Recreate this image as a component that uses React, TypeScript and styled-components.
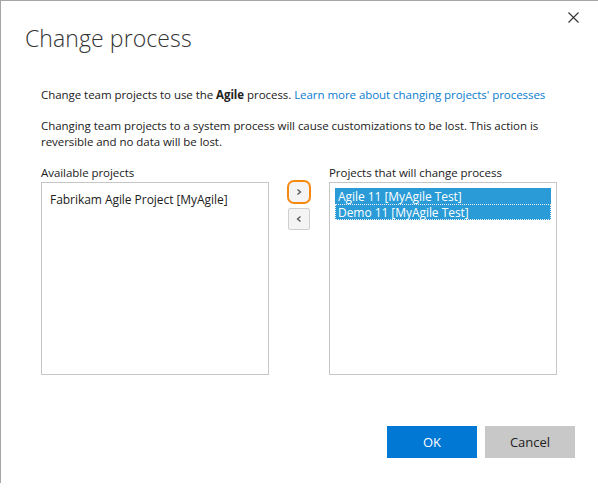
import React from "react";
import styled, { createGlobalStyle } from "styled-components";

const GlobalStyle = createGlobalStyle`
  html, body {
    margin: 0;
    padding: 0;
    background: #fff;
  }
  body {
    font-family: "Open Sans", "Noto Sans", sans-serif;
    color: #212121;
  }
`;

const Dialog = styled.div`
  width: 597px;
  height: 482px;
  border-left: 1px solid #a6a6a6;
  border-top: 1px solid #a6a6a6;
  display: flex;
  flex-direction: column;
`;

const Header = styled.div`
  display: flex;
  justify-content: space-between;
  align-items: flex-start;
  padding: 0 18px 0 24px;
`;

const Title = styled.h1`
  margin: 22px 0 0;
  font-size: 23px;
  font-weight: 300;
  line-height: 30px;
  color: #333;
  letter-spacing: 0.1px;
`;

const CloseButton = styled.button`
  margin-top: 9px;
  width: 14px;
  height: 14px;
  padding: 0;
  border: 0;
  background: none;
  display: flex;
  align-items: center;
  justify-content: center;
  cursor: pointer;
`;

const Body = styled.div`
  padding: 0 40px;
  flex: 1;
  font-size: 11.5px;
  line-height: 16px;
  letter-spacing: -0.05px;
`;

const Paragraph = styled.p<{ $top: number }>`
  margin: ${p => p.$top}px 0 0;
`;

const Link = styled.a`
  color: #0a7ccd;
  text-decoration: none;
`;

const Columns = styled.div`
  display: flex;
  align-items: flex-start;
  margin-top: 15px;
`;

const Column = styled.div`
  width: 228px;
  display: flex;
  flex-direction: column;
`;

const Label = styled.div`
  height: 16px;
  margin-bottom: 1px;
`;

const ListBox = styled.div`
  box-sizing: border-box;
  height: 193px;
  border: 1px solid #c6c6c6;
  padding: 5px 5px;
`;

const Item = styled.div<{ $selected?: boolean; $focused?: boolean }>`
  box-sizing: border-box;
  height: 16px;
  line-height: 15px;
  padding: 0 2px;
  white-space: nowrap;
  font-size: 12px;
  color: ${p => (p.$selected ? "#fff" : "#212121")};
  background: ${p => (p.$selected ? "#2a9bd6" : "transparent")};
  border: 1px dotted ${p => (p.$focused ? "#f0f0f0" : "transparent")};
`;

const PlainItem = styled(Item)`
  padding: 3px 2px 0;
  height: auto;
`;

const MoveButtons = styled.div`
  width: 60px;
  display: flex;
  flex-direction: column;
  align-items: center;
  gap: 5px;
  padding-top: 16px;
`;

const MoveButton = styled.button<{ $focused?: boolean }>`
  box-sizing: border-box;
  width: 22px;
  height: 22px;
  padding: 0;
  display: flex;
  align-items: center;
  justify-content: center;
  background: #f4f4f4;
  border: 1px solid ${p => (p.$focused ? "#f6870f" : "#cfcfcf")};
  border-radius: ${p => (p.$focused ? "6px" : "2px")};
  box-shadow: ${p => (p.$focused ? "0 0 0 1px #f6870f" : "none")};
  cursor: pointer;
`;

const Footer = styled.div`
  display: flex;
  justify-content: flex-end;
  gap: 8px;
  padding: 0 23px 25px 0;
`;

const FooterButton = styled.button<{ $primary?: boolean }>`
  width: 90px;
  height: 32px;
  border: 0;
  font-family: "Open Sans", "Noto Sans", sans-serif;
  font-size: 13px;
  color: ${p => (p.$primary ? "#fff" : "#222")};
  background: ${p => (p.$primary ? "#0078d4" : "#c8c8c8")};
  cursor: pointer;
`;

const Chevron = ({ dir }: { dir: "left" | "right" }) => (
  <svg width="8" height="8" viewBox="0 0 8 8">
    <path
      d={dir === "right" ? "M2.5 1.5 L5.5 4 L2.5 6.5" : "M5.5 1.5 L2.5 4 L5.5 6.5"}
      fill="none"
      stroke="#555"
      strokeWidth="1.3"
    />
  </svg>
);

const App = () => (
  <>
    <GlobalStyle />
    <Dialog>
      <Header>
        <Title>Change process</Title>
        <CloseButton aria-label="Close">
          <svg width="11" height="11" viewBox="0 0 11 11">
            <path d="M0.5 0.5 L10.5 10.5 M10.5 0.5 L0.5 10.5" stroke="#333" strokeWidth="1.1" />
          </svg>
        </CloseButton>
      </Header>
      <Body>
        <Paragraph $top={34}>
          Change team projects to use the <b>Agile</b> process.{" "}
          <Link href="#">Learn more about changing projects' processes</Link>
        </Paragraph>
        <Paragraph $top={15}>
          Changing team projects to a system process will cause customizations to be lost. This
          action is reversible and no data will be lost.
        </Paragraph>
        <Columns>
          <Column>
            <Label>Available projects</Label>
            <ListBox>
              <PlainItem>Fabrikam Agile Project [MyAgile]</PlainItem>
            </ListBox>
          </Column>
          <MoveButtons>
            <MoveButton $focused aria-label="Move right">
              <Chevron dir="right" />
            </MoveButton>
            <MoveButton aria-label="Move left">
              <Chevron dir="left" />
            </MoveButton>
          </MoveButtons>
          <Column>
            <Label>Projects that will change process</Label>
            <ListBox>
              <Item $selected>Agile 11 [MyAgile Test]</Item>
              <Item $selected $focused>Demo 11 [MyAgile Test]</Item>
            </ListBox>
          </Column>
        </Columns>
      </Body>
      <Footer>
        <FooterButton $primary>OK</FooterButton>
        <FooterButton>Cancel</FooterButton>
      </Footer>
    </Dialog>
  </>
);

export default App;
